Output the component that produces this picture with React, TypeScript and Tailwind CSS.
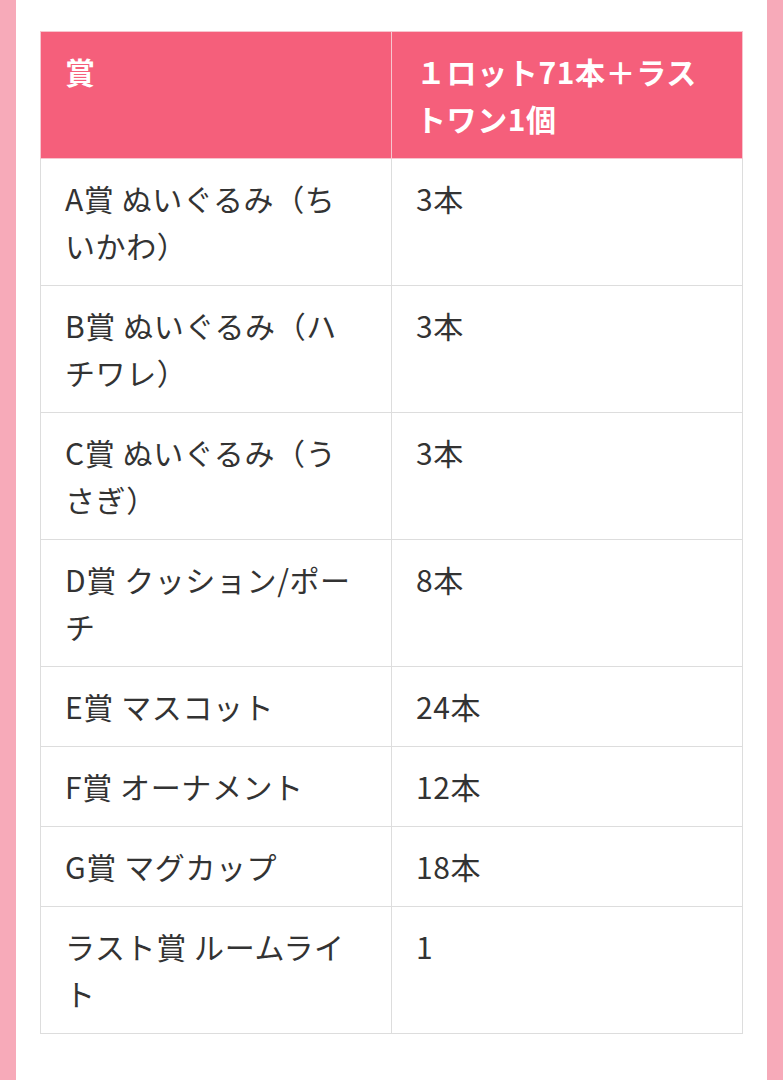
const rows: [string[], string][] = [
  [['A賞 ぬいぐるみ（ち', 'いかわ）'], '3本'],
  [['B賞 ぬいぐるみ（ハ', 'チワレ）'], '3本'],
  [['C賞 ぬいぐるみ（う', 'さぎ）'], '3本'],
  [['D賞 クッション/ポー', 'チ'], '8本'],
  [['E賞 マスコット'], '24本'],
  [['F賞 オーナメント'], '12本'],
  [['G賞 マグカップ'], '18本'],
  [['ラスト賞 ルームライ', 'ト'], '1'],
]

export default function App() {
  return (
    <div
      className="flex min-h-[1080px] w-[783px] bg-white"
      style={{ fontFamily: '"Noto Sans CJK JP", "Noto Sans", sans-serif' }}
    >
      <div className="w-4 shrink-0 bg-[#f7aab9]" />
      <div className="flex-1 px-6 pt-[31px]">
        <table className="w-full table-fixed border-collapse text-[30px] leading-[47px] tracking-[0.6px] text-[#333]">
          <thead>
            <tr className="bg-[#f55f7b] text-white">
              <th className="w-1/2 border border-[#f7c5cf] px-6 py-4 text-left align-top font-bold">賞</th>
              <th className="w-1/2 border border-[#f7c5cf] px-6 py-4 text-left align-top font-bold">
                １ロット71本＋ラス<br />トワン1個
              </th>
            </tr>
          </thead>
          <tbody>
            {rows.map(([lines, count]) => (
              <tr key={lines.join('')}>
                <td className="border border-[#dddddd] px-6 py-4 align-top">
                  {lines.map((l, i) => (
                    <span key={i} className="block whitespace-nowrap">{l}</span>
                  ))}
                </td>
                <td className="border border-[#dddddd] px-6 py-4 align-top">{count}</td>
              </tr>
            ))}
          </tbody>
        </table>
      </div>
      <div className="w-4 shrink-0 bg-[#f7aab9]" />
    </div>
  )
}
